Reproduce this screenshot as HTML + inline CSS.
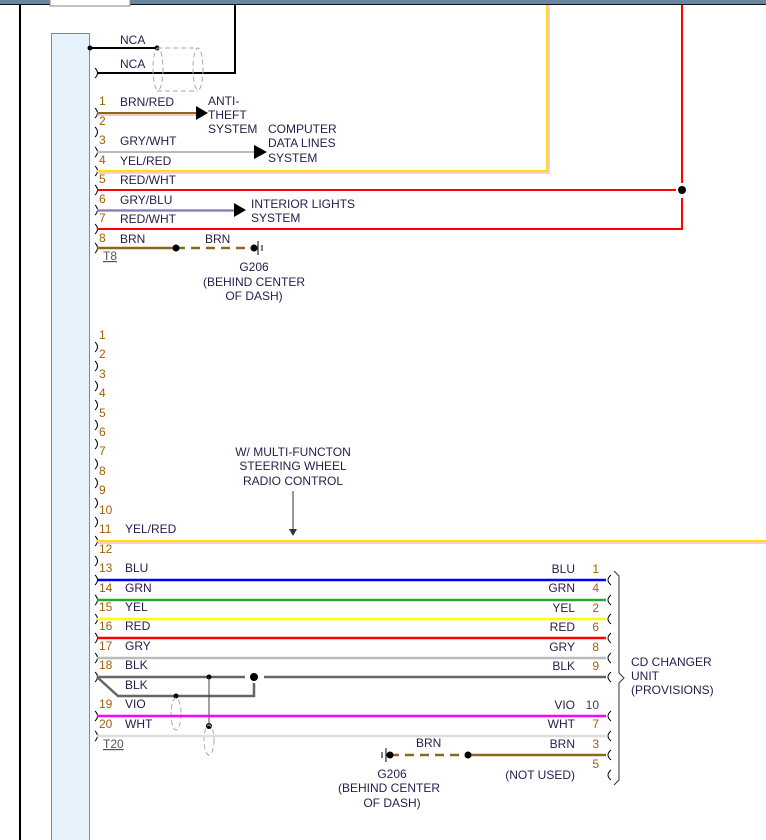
<!DOCTYPE html>
<html><head><style>
html,body{margin:0;padding:0;background:#fff;overflow:hidden}
svg{display:block}
text{font-family:"Liberation Sans",Arial,sans-serif;font-size:12px;fill:#2a1a4a}
.n{fill:#a0600a}
</style></head><body>
<svg width="766" height="840" viewBox="0 0 766 840" xmlns="http://www.w3.org/2000/svg">
<rect x="0" y="0" width="766" height="4" fill="#6a85a0"/>
<line x1="0" y1="4.5" x2="766" y2="4.5" stroke="#111" stroke-width="1"/>
<rect x="50" y="-2" width="80" height="8" fill="#fff" stroke="#888"/>
<line x1="20" y1="5" x2="20" y2="840" stroke="#000" stroke-width="2"/>
<rect x="51.5" y="33.5" width="38" height="820" fill="#e6f3fc" stroke="#888"/>

<!-- NCA -->
<line x1="90" y1="48" x2="157" y2="48" stroke="#000" stroke-width="2"/>
<circle cx="90" cy="48" r="2.5"/><circle cx="157" cy="48" r="2.5"/>
<path d="M97 73 H235 V5" fill="none" stroke="#000" stroke-width="2"/>
<path d="M157 48 H198 M157 91 H198" stroke="#aaa" stroke-dasharray="5,3"/>
<ellipse cx="158" cy="69" rx="5" ry="21" fill="none" stroke="#aaa" stroke-dasharray="5,3"/>
<ellipse cx="198" cy="69" rx="5" ry="21" fill="none" stroke="#aaa" stroke-dasharray="5,3"/>
<text x="120" y="44">NCA</text><text x="120" y="68">NCA</text>

<g fill="none" stroke="#000" stroke-width="1">
<path d="M95 68 q5 5 0 10"/>
<path d="M95 108 q5 5 0 10"/><path d="M95 127 q5 5 0 10"/><path d="M95 147 q5 5 0 10"/>
<path d="M95 166 q5 5 0 10"/><path d="M95 185 q5 5 0 10"/><path d="M95 205 q5 5 0 10"/>
<path d="M95 224 q5 5 0 10"/><path d="M95 243 q5 5 0 10"/>
</g>
<!-- wires top -->
<line x1="97" y1="113" x2="200" y2="113" stroke="#8a6a1a" stroke-width="2"/>
<line x1="97" y1="115" x2="200" y2="115" stroke="#f88" stroke-width="1"/>
<path d="M196 106 L208 113 L196 120Z" fill="#000"/>
<line x1="97" y1="152" x2="258" y2="152" stroke="#bbb" stroke-width="2"/>
<path d="M254 145 L267 152 L254 159Z" fill="#000"/>
<path d="M97 171 H547 V5" fill="none" stroke="#ffe000" stroke-width="2"/>
<path d="M97 173 H549 V5" fill="none" stroke="#f99" stroke-width="1"/>
<line x1="97" y1="190" x2="676" y2="190" stroke="#f00" stroke-width="2"/>
<line x1="682" y1="5" x2="682" y2="183" stroke="#f00" stroke-width="2"/>
<path d="M682 198 V229 H97" fill="none" stroke="#f00" stroke-width="2"/>
<circle cx="682" cy="190" r="4"/>
<line x1="97" y1="210" x2="238" y2="210" stroke="#aaa" stroke-width="2"/>
<line x1="97" y1="211" x2="238" y2="211" stroke="#55c" stroke-width="1"/>
<path d="M234 203 L246 210 L234 217Z" fill="#000"/>
<line x1="97" y1="248" x2="176" y2="248" stroke="#8a6a1a" stroke-width="2.5"/>
<line x1="176" y1="248" x2="254" y2="248" stroke="#8a6a1a" stroke-width="2.5" stroke-dasharray="9,6"/>
<circle cx="176" cy="248" r="3.5"/><circle cx="254" cy="248" r="3.5"/>
<line x1="258" y1="241" x2="258" y2="255" stroke="#000"/><line x1="262" y1="245" x2="262" y2="251" stroke="#000"/>

<text class="n" x="99" y="105">1</text><text class="n" x="99" y="125">2</text><text class="n" x="99" y="144">3</text>
<text class="n" x="99" y="164">4</text><text class="n" x="99" y="183">5</text><text class="n" x="99" y="203">6</text>
<text class="n" x="99" y="222">7</text><text class="n" x="99" y="242">8</text>
<text x="120" y="106">BRN/RED</text><text x="120" y="145">GRY/WHT</text><text x="120" y="165">YEL/RED</text>
<text x="120" y="184">RED/WHT</text><text x="120" y="204">GRY/BLU</text><text x="120" y="223">RED/WHT</text>
<text x="120" y="243">BRN</text><text x="205" y="243">BRN</text>
<text x="208" y="105">ANTI-</text><text x="208" y="119">THEFT</text><text x="208" y="133">SYSTEM</text>
<text x="268" y="133">COMPUTER</text><text x="268" y="147">DATA LINES</text><text x="268" y="162">SYSTEM</text>
<text x="251" y="208">INTERIOR LIGHTS</text><text x="251" y="222">SYSTEM</text>
<text x="103" y="260" style="fill:#555;text-decoration:underline">T8</text>
<g text-anchor="middle"><text x="254" y="271">G206</text><text x="254" y="286">(BEHIND CENTER</text><text x="254" y="300">OF DASH)</text></g>

<!-- lower connector -->
<g fill="none" stroke="#000" stroke-width="1">
<path d="M95 342 q5 5 0 10"/><path d="M95 361 q5 5 0 10"/><path d="M95 381 q5 5 0 10"/><path d="M95 400 q5 5 0 10"/>
<path d="M95 420 q5 5 0 10"/><path d="M95 439 q5 5 0 10"/><path d="M95 459 q5 5 0 10"/><path d="M95 478 q5 5 0 10"/>
<path d="M95 498 q5 5 0 10"/><path d="M95 517 q5 5 0 10"/><path d="M95 536 q5 5 0 10"/><path d="M95 556 q5 5 0 10"/>
<path d="M95 575 q5 5 0 10"/><path d="M95 595 q5 5 0 10"/><path d="M95 614 q5 5 0 10"/><path d="M95 633 q5 5 0 10"/>
<path d="M95 653 q5 5 0 10"/><path d="M95 672 q5 5 0 10"/><path d="M95 711 q5 5 0 10"/><path d="M95 731 q5 5 0 10"/>
</g>
<g class="n">
<text class="n" x="99" y="339">1</text><text class="n" x="99" y="358">2</text><text class="n" x="99" y="378">3</text>
<text class="n" x="99" y="397">4</text><text class="n" x="99" y="417">5</text><text class="n" x="99" y="436">6</text>
<text class="n" x="99" y="455">7</text><text class="n" x="99" y="475">8</text><text class="n" x="99" y="494">9</text>
<text class="n" x="99" y="514">10</text><text class="n" x="99" y="533">11</text><text class="n" x="99" y="553">12</text>
<text class="n" x="99" y="572">13</text><text class="n" x="99" y="592">14</text><text class="n" x="99" y="611">15</text>
<text class="n" x="99" y="630">16</text><text class="n" x="99" y="650">17</text><text class="n" x="99" y="669">18</text>
<text class="n" x="99" y="708">19</text><text class="n" x="99" y="728">20</text>
</g>
<text x="125" y="533">YEL/RED</text>
<g text-anchor="middle"><text x="293" y="456">W/ MULTI-FUNCTON</text><text x="293" y="470">STEERING WHEEL</text><text x="293" y="485">RADIO CONTROL</text></g>
<line x1="293" y1="491" x2="293" y2="530" stroke="#333"/><path d="M289 529 L293 536 L297 529Z" fill="#333"/>
<line x1="97" y1="541" x2="766" y2="541" stroke="#ffe000" stroke-width="2"/>
<line x1="97" y1="543" x2="766" y2="543" stroke="#f99" stroke-width="1"/>

<line x1="97" y1="580" x2="606" y2="580" stroke="#00f" stroke-width="2.5"/>
<line x1="97" y1="600" x2="606" y2="600" stroke="#2a2" stroke-width="2.5"/>
<line x1="97" y1="619" x2="606" y2="619" stroke="#ff0" stroke-width="2.5"/>
<line x1="97" y1="638" x2="606" y2="638" stroke="#f00" stroke-width="2.5"/>
<line x1="97" y1="658" x2="606" y2="658" stroke="#bbb" stroke-width="2.5"/>
<line x1="97" y1="677" x2="245" y2="677" stroke="#666" stroke-width="2.5"/>
<line x1="264" y1="677" x2="606" y2="677" stroke="#666" stroke-width="2.5"/>
<path d="M97 677 L118 696 H254 V683" fill="none" stroke="#666" stroke-width="2.5"/>
<circle cx="254" cy="677" r="4"/><circle cx="176" cy="696" r="2.5"/><circle cx="209" cy="677" r="2.5"/><circle cx="209" cy="726" r="3"/>
<line x1="209" y1="677" x2="209" y2="726" stroke="#444"/>
<ellipse cx="176" cy="714" rx="5" ry="16" fill="none" stroke="#aaa" stroke-dasharray="5,3"/>
<ellipse cx="209" cy="740" rx="5" ry="15" fill="none" stroke="#aaa" stroke-dasharray="5,3"/>
<line x1="97" y1="716" x2="606" y2="716" stroke="#f0f" stroke-width="2.5"/>
<line x1="97" y1="736" x2="606" y2="736" stroke="#ddd" stroke-width="2.5"/>
<line x1="468" y1="755" x2="606" y2="755" stroke="#8a6a1a" stroke-width="2.5"/>
<line x1="390" y1="755" x2="468" y2="755" stroke="#8a6a1a" stroke-width="2.5" stroke-dasharray="9,6"/>
<circle cx="390" cy="755" r="3.5"/><circle cx="468" cy="755" r="3.5"/>
<line x1="386" y1="748" x2="386" y2="762" stroke="#000"/><line x1="382" y1="752" x2="382" y2="758" stroke="#000"/>

<text x="125" y="572">BLU</text><text x="125" y="592">GRN</text><text x="125" y="611">YEL</text><text x="125" y="630">RED</text>
<text x="125" y="650">GRY</text><text x="125" y="669">BLK</text><text x="125" y="689">BLK</text><text x="125" y="708">VIO</text><text x="125" y="728">WHT</text>
<text x="103" y="748" style="fill:#555;text-decoration:underline">T20</text>
<text x="416" y="747">BRN</text>
<g text-anchor="middle"><text x="392" y="778">G206</text><text x="389" y="792">(BEHIND CENTER</text><text x="392" y="807">OF DASH)</text></g>

<g text-anchor="end">
<text x="575" y="573">BLU</text><text x="575" y="592">GRN</text><text x="575" y="612">YEL</text><text x="575" y="631">RED</text>
<text x="575" y="651">GRY</text><text x="575" y="670">BLK</text><text x="575" y="709">VIO</text><text x="575" y="728">WHT</text>
<text x="575" y="748">BRN</text><text x="575" y="779">(NOT USED)</text>
<text class="n" x="599" y="573">1</text><text class="n" x="599" y="592">4</text><text class="n" x="599" y="612">2</text><text class="n" x="599" y="631">6</text>
<text class="n" x="599" y="651">8</text><text class="n" x="599" y="670">9</text><text class="n" x="599" y="709" style="fill:#602080">10</text><text class="n" x="599" y="728">7</text>
<text class="n" x="599" y="748">3</text><text class="n" x="599" y="768">5</text>
</g>
<g fill="none" stroke="#000" stroke-width="1">
<path d="M611 575 q-6 5 0 10"/><path d="M611 595 q-6 5 0 10"/><path d="M611 614 q-6 5 0 10"/><path d="M611 633 q-6 5 0 10"/>
<path d="M611 653 q-6 5 0 10"/><path d="M611 672 q-6 5 0 10"/><path d="M611 711 q-6 5 0 10"/><path d="M611 731 q-6 5 0 10"/>
<path d="M611 750 q-6 5 0 10"/><path d="M611 770 q-6 5 0 10"/>
<path d="M614 571 L619 576 V673 L624 678 L619 683 V780 L614 785" stroke="#333"/>
</g>
<text x="631" y="666">CD CHANGER</text><text x="631" y="680">UNIT</text><text x="631" y="694">(PROVISIONS)</text>
</svg>
</body></html>
